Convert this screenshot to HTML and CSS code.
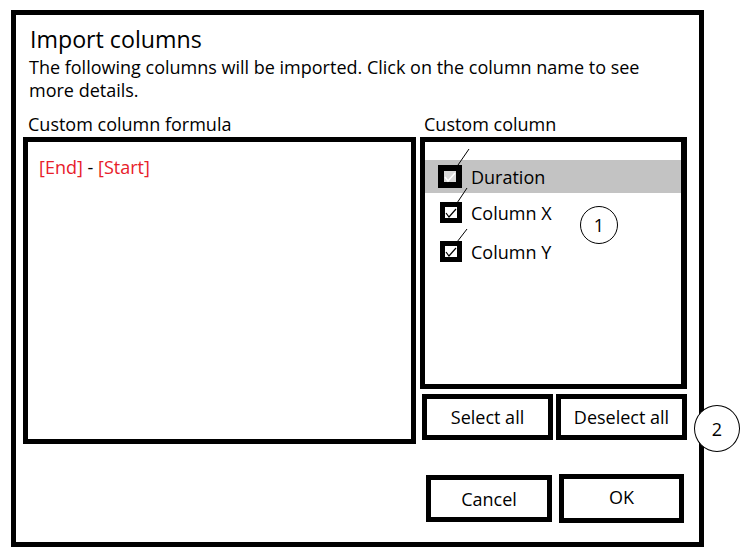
FILE: index.html
```html
<!DOCTYPE html>
<html>
<head>
<meta charset="utf-8">
<link rel="stylesheet" href="styles.css">
</head>
<body>
<div class="dialog">
  <h1 class="title">Import columns</h1>
  <p class="desc">The following columns will be imported. Click on the column name to see more details.</p>
  <div class="main">
    <div class="left">
      <div class="label">Custom column formula</div>
      <div class="formula"><span class="ref">[End]</span> - <span class="ref">[Start]</span></div>
    </div>
    <div class="right">
      <div class="label label-right">Custom column</div>
      <div class="list">
        <div class="row row-sel">
          <svg class="cb" width="24" height="23" viewBox="0 0 24 23"><rect x="0" y="0" width="24" height="23" fill="#000"/><rect x="6" y="6" width="12" height="11" fill="#d8d8d8"/><path d="M7 12 L10 16 L17 8" stroke="#fff" stroke-width="1.5" fill="none"/><path d="M20 0 L31 -16" stroke="#000" stroke-width="1" fill="none"/></svg>
          <span class="name">Duration</span>
        </div>
        <div class="row">
          <svg class="cb" width="22" height="21" viewBox="0 0 22 21"><rect x="0" y="0" width="22" height="21" fill="#000"/><rect x="5" y="5" width="12" height="11" fill="#fff"/><path d="M6 11 L9 15 L16 7" stroke="#000" stroke-width="1.2" fill="none"/><path d="M17 1 L27 -14" stroke="#000" stroke-width="1" fill="none"/></svg>
          <span class="name">Column X</span>
        </div>
        <div class="row">
          <svg class="cb" width="22" height="21" viewBox="0 0 22 21"><rect x="0" y="0" width="22" height="21" fill="#000"/><rect x="5" y="5" width="12" height="11" fill="#fff"/><path d="M6 11 L9 15 L16 7" stroke="#000" stroke-width="1.2" fill="none"/><path d="M17 1 L27 -12" stroke="#000" stroke-width="1" fill="none"/></svg>
          <span class="name">Column Y</span>
        </div>
        <div class="badge badge-1">1</div>
      </div>
      <div class="btn-row">
        <div class="btn">Select all</div>
        <div class="btn">Deselect all</div>
      </div>
    </div>
  </div>
  <div class="footer">
    <div class="btn btn-cancel">Cancel</div>
    <div class="btn btn-ok">OK</div>
  </div>
  <div class="badge badge-2">2</div>
</div>
</body>
</html>
```

FILE: styles.css
```css
* { box-sizing: border-box; }
html, body { margin: 0; padding: 0; background: #fff; }
body {
  font-family: "Open Sans", "Noto Sans", sans-serif;
  color: #000;
  width: 751px;
  height: 560px;
  overflow: hidden;
}
.dialog {
  position: relative;
  margin: 10px 0 0 11px;
  width: 693px;
  height: 537px;
  border: 5px solid #000;
  padding: 0 12px 0 7px;
}
.title {
  margin: 9px 0 0 7px;
  font-size: 23.2px;
  font-weight: 400;
  line-height: 30px;
}
.desc {
  margin: 2px 0 0 6px;
  width: 640px;
  font-size: 18px;
  line-height: 23px;
}
.main {
  display: grid;
  grid-template-columns: 393px 267px;
  column-gap: 4px;
  margin-top: 11px;
}
.label {
  font-size: 18px;
  line-height: 22px;
  height: 24px;
  padding-left: 5px;
}
.label-right { padding-left: 4px; }
.formula {
  height: 307px;
  border: 5px solid #000;
  padding: 13px 0 0 11px;
  font-size: 18px;
  line-height: 24px;
}
.ref { color: #e8202a; }
.list {
  position: relative;
  height: 252px;
  border: 5px solid #000;
  border-right-width: 6px;
  padding-top: 18px;
}
.row {
  display: flex;
  align-items: center;
  height: 39px;
  padding-left: 15px;
}
.row-sel {
  background: #c3c3c3;
  height: 33px;
  padding-left: 13px;
}
.cb { overflow: visible; flex: none; }
.name {
  margin-left: 9px;
  font-size: 18px;
}
.row-sel .name { margin-left: 9px; }
.badge {
  position: absolute;
  border: 1px solid #000;
  border-radius: 50%;
  background: #fff;
  display: flex;
  align-items: center;
  justify-content: center;
  font-size: 18px;
}
.badge-1 {
  left: 155px;
  top: 64px;
  width: 38px;
  height: 38px;
}
.badge-2 {
  left: 678px;
  top: 390px;
  width: 46px;
  height: 47px;
}
.btn-row {
  display: flex;
  gap: 3px;
  margin-top: 5px;
  margin-left: 2px;
}
.btn {
  border: 5px solid #000;
  width: 131px;
  height: 46px;
  display: flex;
  align-items: center;
  justify-content: center;
  font-size: 18px;
}
.footer {
  display: flex;
  gap: 7px;
  margin-top: 30px;
  margin-left: 403px;
}
.btn-cancel { width: 126px; height: 47px; margin-top: 1px; }
.btn-ok { width: 125px; height: 49px; padding-bottom: 4px; }
```
